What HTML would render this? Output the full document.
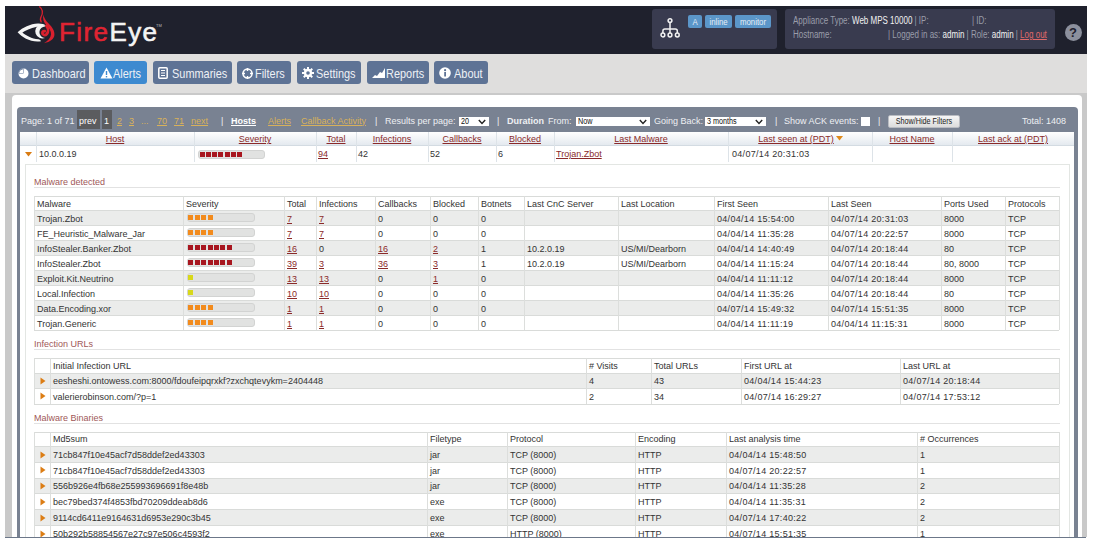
<!DOCTYPE html>
<html><head><meta charset="utf-8"><style>
*{box-sizing:border-box}
html,body{margin:0;padding:0}
body{width:1094px;height:545px;overflow:hidden;background:#fff;position:relative;font-family:"Liberation Sans",sans-serif}
.a{position:absolute}
.t{white-space:nowrap}
.s9{}
.ul{text-decoration:underline}
</style></head><body>
<div class="a" style="left:5px;top:6px;width:1082px;height:48px;background:#1f212d"></div>
<svg class="a" style="left:14px;top:4px" width="42" height="40" viewBox="0 0 42 40">
<path fill="#f4f4f4" d="M3.6 28.3 C9 23.5 16 20 24 19.6 C27.5 19.5 30.5 20.3 32.2 21.8 C29 21.8 26 22 23 22.8 C16 24.5 11.5 26.5 8.4 28.4 C12 31.5 17.5 34.5 24.5 35.3 C25.8 35.6 26.6 36.2 27 37.2 C17 38.5 8.5 34 3.6 28.3 Z"/>
<path fill="#f4f4f4" d="M26 20.4 A6.9 6.9 0 1 0 31 34 A5.2 5.2 0 1 1 31.4 22.4 A6.9 6.9 0 0 0 26 20.4 Z"/>
<path fill="none" stroke="#d6202d" stroke-width="1.3" stroke-linecap="round" d="M25.6 2.8 C29 5.5 29 9 27.2 12.5 C26 14.8 26.3 16.5 27.2 17.8"/>
<path fill="#d9202e" d="M29.4 10.8 C30 14 31.8 16.8 34.6 19.6 C38.4 23.5 40.8 27 40.4 31 C40 35 36.5 37.8 30 39.2 C34 36.8 36.6 34.2 37 30.6 C37.3 27 35 23.8 32.4 21.2 C29.8 18.6 28.4 15 29.4 10.8 Z"/>
<path fill="none" stroke="#d9202e" stroke-width="2.8" stroke-linecap="round" d="M32.4 22 C34.4 24.5 34.6 28 32.8 30 C31.2 31.8 28.6 31.2 28.4 29 C28.3 27.6 29.5 26.8 30.8 27.2"/>
</svg>
<div class="a t" style="left:59px;top:19px;font-size:26px;line-height:26px;letter-spacing:1.4px;-webkit-text-stroke:0.6px"><span style="color:#df2432;-webkit-text-stroke-color:#df2432">Fire</span><span style="color:#f4f4f4;-webkit-text-stroke-color:#f4f4f4">Eye</span></div>
<div class="a t" style="left:156px;top:24px;font-size:4px;line-height:4px;color:#bbb">TM</div>
<div class="a" style="left:652px;top:9px;width:125px;height:40px;background:#393b4f;border-radius:3px"></div>
<svg class="a" style="left:659px;top:16px" width="22" height="24" viewBox="0 0 22 24">
<g fill="none" stroke="#f2f2f2" stroke-width="1.5">
<circle cx="11" cy="4.6" r="1.9"/>
<circle cx="3.9" cy="19" r="1.9"/><circle cx="11" cy="19" r="1.9"/><circle cx="18.3" cy="19" r="1.9"/>
<path d="M11 6.5 V17.1 M3.9 17.1 V15 Q3.9 13 5.9 13 H16.3 Q18.3 13 18.3 15 V17.1"/>
</g></svg>
<div class="a" style="left:688px;top:15px;width:14px;height:13px;background:#5b96c9;border-radius:2px"></div>
<div class="a t cond" style="left:688px;width:14px;top:14.8px;height:13px;line-height:13px;font-size:9.5px;color:#e6eef6;text-align:center;transform:scaleX(0.82)">A</div>
<div class="a" style="left:705px;top:15px;width:27px;height:13px;background:#5b96c9;border-radius:2px"></div>
<div class="a t cond" style="left:705px;width:27px;top:14.8px;height:13px;line-height:13px;font-size:9.5px;color:#e6eef6;text-align:center;transform:scaleX(0.82)">inline</div>
<div class="a" style="left:735px;top:15px;width:36px;height:13px;background:#5b96c9;border-radius:2px"></div>
<div class="a t cond" style="left:735px;width:36px;top:14.8px;height:13px;line-height:13px;font-size:9.5px;color:#e6eef6;text-align:center;transform:scaleX(0.82)">monitor</div>
<div class="a" style="left:785px;top:9px;width:270px;height:40px;background:#393b4f;border-radius:3px"></div>
<div class="a t" style="left:793px;top:16.43px;font-size:10px;line-height:10px;transform:scaleX(0.8);transform-origin:0 0"><span style="color:#9a9daa">Appliance Type: </span><span style="color:#f2f2f2">Web MPS 10000</span><span style="color:#9a9daa"> | IP:</span></div>
<div class="a t" style="left:972px;top:16.43px;font-size:10px;line-height:10px;transform:scaleX(0.8);transform-origin:0 0"><span style="color:#9a9daa">| ID:</span></div>
<div class="a t" style="left:793px;top:30.04px;font-size:10px;line-height:10px;transform:scaleX(0.8);transform-origin:0 0"><span style="color:#9a9daa">Hostname:</span></div>
<div class="a t" style="left:888px;top:30.04px;font-size:10px;line-height:10px;transform:scaleX(0.8);transform-origin:0 0"><span style="color:#9a9daa">| Logged in as: </span><span style="color:#f2f2f2">admin</span><span style="color:#9a9daa"> | Role: </span><span style="color:#f2f2f2">admin</span><span style="color:#9a9daa"> | </span><span style="color:#e06a6a"><u>Log out</u></span></div>
<div class="a" style="left:1064.5px;top:23.5px;width:17px;height:17px;background:#8c909d;border-radius:50%"></div>
<div class="a t" style="left:1064.5px;top:24px;width:17px;height:17px;line-height:17px;text-align:center;font-size:13px;font-weight:bold;color:#1f212d">?</div>
<div class="a" style="left:5px;top:54px;width:1082px;height:39px;background:#dfdedd"></div>
<div class="a" style="left:5px;top:93px;width:1082px;height:444px;background:#c9c9c9"></div>
<div class="a" style="left:12px;top:95px;width:1070px;height:442px;background:#fff;border-radius:4px 4px 0 0"></div>
<div class="a" style="left:12px;top:61px;width:77px;height:23px;background:#5e7395;border-radius:3px"></div>
<svg class="a" style="left:18px;top:68px" width="11" height="11" viewBox="0 0 11 11"><circle cx="5.5" cy="5.5" r="5" fill="#fff"/><path d="M5.5 5.5 V0.5 A5 5 0 0 0 0.5 5.5 Z" fill="#5e7395"/><path d="M5 5 V1.2 A4.3 4.3 0 0 0 1.2 5 Z" fill="#fff"/></svg>
<div class="a t" style="left:32px;top:66.77px;font-size:13.5px;line-height:13.5px;color:#eef1f5;transform:scaleX(0.81);transform-origin:0 0">Dashboard</div>
<div class="a" style="left:94px;top:61px;width:53px;height:23px;background:#3d8ad0;border-radius:3px"></div>
<svg class="a" style="left:100px;top:67px" width="13" height="12" viewBox="0 0 13 12"><path d="M6.5 0.5 L12.5 11.5 H0.5 Z" fill="#fff"/><rect x="5.8" y="4" width="1.4" height="4" fill="#3d8ad0"/><rect x="5.8" y="9" width="1.4" height="1.4" fill="#3d8ad0"/></svg>
<div class="a t" style="left:113px;top:66.77px;font-size:13.5px;line-height:13.5px;color:#eef1f5;transform:scaleX(0.81);transform-origin:0 0">Alerts</div>
<div class="a" style="left:153px;top:61px;width:79px;height:23px;background:#5e7395;border-radius:3px"></div>
<svg class="a" style="left:158px;top:67px" width="10" height="12" viewBox="0 0 10 12"><rect x="0.8" y="0.8" width="8.4" height="10.4" rx="1" fill="none" stroke="#fff" stroke-width="1.5"/><rect x="3" y="3" width="4" height="1" fill="#fff"/><rect x="3" y="5.5" width="4" height="1" fill="#fff"/><rect x="3" y="8" width="4" height="1" fill="#fff"/></svg>
<div class="a t" style="left:172px;top:66.77px;font-size:13.5px;line-height:13.5px;color:#eef1f5;transform:scaleX(0.81);transform-origin:0 0">Summaries</div>
<div class="a" style="left:237px;top:61px;width:54px;height:23px;background:#5e7395;border-radius:3px"></div>
<svg class="a" style="left:242px;top:68px" width="11" height="11" viewBox="0 0 11 11"><circle cx="5.5" cy="5.5" r="4.5" fill="none" stroke="#fff" stroke-width="1.5"/><path d="M5.5 0 V3 M5.5 8 V11 M0 5.5 H3 M8 5.5 H11" stroke="#fff" stroke-width="1.5"/></svg>
<div class="a t" style="left:255px;top:66.77px;font-size:13.5px;line-height:13.5px;color:#eef1f5;transform:scaleX(0.81);transform-origin:0 0">Filters</div>
<div class="a" style="left:297px;top:61px;width:64px;height:23px;background:#5e7395;border-radius:3px"></div>
<svg class="a" style="left:302px;top:67px" width="12" height="12" viewBox="0 0 12 12"><g fill="#fff"><circle cx="6" cy="6" r="4.2"/><rect x="5" y="0" width="2" height="12"/><rect x="0" y="5" width="12" height="2"/><rect x="5" y="0" width="2" height="12" transform="rotate(45 6 6)"/><rect x="5" y="0" width="2" height="12" transform="rotate(-45 6 6)"/></g><circle cx="6" cy="6" r="1.8" fill="#5e7395"/></svg>
<div class="a t" style="left:316px;top:66.77px;font-size:13.5px;line-height:13.5px;color:#eef1f5;transform:scaleX(0.81);transform-origin:0 0">Settings</div>
<div class="a" style="left:367px;top:61px;width:62px;height:23px;background:#5e7395;border-radius:3px"></div>
<svg class="a" style="left:372px;top:68px" width="13" height="10" viewBox="0 0 13 10"><path d="M0 10 L3 7 L5 8 L8 4 L10 5 L13 0 V10 Z" fill="#fff"/></svg>
<div class="a t" style="left:386px;top:66.77px;font-size:13.5px;line-height:13.5px;color:#eef1f5;transform:scaleX(0.81);transform-origin:0 0">Reports</div>
<div class="a" style="left:434px;top:61px;width:54px;height:23px;background:#5e7395;border-radius:3px"></div>
<svg class="a" style="left:439px;top:67px" width="12" height="12" viewBox="0 0 12 12"><circle cx="6" cy="6" r="5.8" fill="#fff"/><rect x="5.2" y="5" width="1.8" height="4.5" fill="#5e7395"/><circle cx="6.1" cy="3.2" r="1.1" fill="#5e7395"/></svg>
<div class="a t" style="left:454px;top:66.77px;font-size:13.5px;line-height:13.5px;color:#eef1f5;transform:scaleX(0.81);transform-origin:0 0">About</div>
<div class="a" style="left:17px;top:107px;width:1061px;height:430px;background:#798292;border-radius:4px 4px 0 0"></div>
<div class="a" style="left:20px;top:132px;width:1054px;height:405px;background:#fff"></div>
<div class="a t  s9" style="left:21px;top:116.58px;font-size:9px;line-height:9px;color:#eef0f2;">Page: 1 of 71</div>
<div class="a" style="left:77px;top:110px;width:23px;height:19px;background:#5b5c5f"></div>
<div class="a t  s9" style="left:79px;top:116.58px;font-size:9px;line-height:9px;color:#fff;">prev</div>
<div class="a" style="left:102px;top:110px;width:10px;height:19px;background:#5b5c5f"></div>
<div class="a t  s9" style="left:104px;top:116.58px;font-size:9px;line-height:9px;color:#fff;">1</div>
<div class="a t  s9" style="left:117px;top:116.58px;font-size:9px;line-height:9px;color:#d8b15a;text-decoration:underline">2</div>
<div class="a t  s9" style="left:129px;top:116.58px;font-size:9px;line-height:9px;color:#d8b15a;text-decoration:underline">3</div>
<div class="a t  s9" style="left:157px;top:116.58px;font-size:9px;line-height:9px;color:#d8b15a;text-decoration:underline">70</div>
<div class="a t  s9" style="left:174px;top:116.58px;font-size:9px;line-height:9px;color:#d8b15a;text-decoration:underline">71</div>
<div class="a t  s9" style="left:191px;top:116.58px;font-size:9px;line-height:9px;color:#d8b15a;text-decoration:underline">next</div>
<div class="a t  s9" style="left:141px;top:116.58px;font-size:9px;line-height:9px;color:#d8b15a;">...</div>
<div class="a t  s9" style="left:221px;top:116.58px;font-size:9px;line-height:9px;color:#eef0f2;">|</div>
<div class="a t  s9" style="left:231px;top:116.58px;font-size:9px;line-height:9px;color:#fff;font-weight:bold;text-decoration:underline">Hosts</div>
<div class="a t  s9" style="left:268px;top:116.58px;font-size:9px;line-height:9px;color:#d8b15a;text-decoration:underline">Alerts</div>
<div class="a t  s9" style="left:301px;top:116.58px;font-size:9px;line-height:9px;color:#d8b15a;text-decoration:underline">Callback Activity</div>
<div class="a t  s9" style="left:375px;top:116.58px;font-size:9px;line-height:9px;color:#eef0f2;">|</div>
<div class="a t  s9" style="left:385px;top:116.58px;font-size:9px;line-height:9px;color:#eef0f2;">Results per page:</div>
<div class="a" style="left:459px;top:117px;width:30px;height:9px;background:#fff"></div>
<div class="a t" style="left:461px;top:116.5px;height:9px;line-height:9px;font-size:8.5px;color:#111;transform:scaleX(0.85);transform-origin:0 0">20</div>
<svg class="a" style="left:478px;top:119px" width="8" height="6" viewBox="0 0 8 6"><path d="M0.8 1 L4 4.5 L7.2 1" fill="none" stroke="#222" stroke-width="1.4"/></svg>
<div class="a t  s9" style="left:497px;top:116.58px;font-size:9px;line-height:9px;color:#eef0f2;">|</div>
<div class="a t  s9" style="left:507px;top:116.58px;font-size:9px;line-height:9px;color:#eef0f2;font-weight:bold">Duration</div>
<div class="a t  s9" style="left:548px;top:116.58px;font-size:9px;line-height:9px;color:#eef0f2;">From:</div>
<div class="a" style="left:576px;top:117px;width:74px;height:9px;background:#fff"></div>
<div class="a t" style="left:578px;top:116.5px;height:9px;line-height:9px;font-size:8.5px;color:#111;transform:scaleX(0.85);transform-origin:0 0">Now</div>
<svg class="a" style="left:639px;top:119px" width="8" height="6" viewBox="0 0 8 6"><path d="M0.8 1 L4 4.5 L7.2 1" fill="none" stroke="#222" stroke-width="1.4"/></svg>
<div class="a t  s9" style="left:654px;top:116.58px;font-size:9px;line-height:9px;color:#eef0f2;">Going Back:</div>
<div class="a" style="left:705px;top:117px;width:61px;height:9px;background:#fff"></div>
<div class="a t" style="left:707px;top:116.5px;height:9px;line-height:9px;font-size:8.5px;color:#111;transform:scaleX(0.85);transform-origin:0 0">3 months</div>
<svg class="a" style="left:755px;top:119px" width="8" height="6" viewBox="0 0 8 6"><path d="M0.8 1 L4 4.5 L7.2 1" fill="none" stroke="#222" stroke-width="1.4"/></svg>
<div class="a t  s9" style="left:775px;top:116.58px;font-size:9px;line-height:9px;color:#eef0f2;">|</div>
<div class="a t  s9" style="left:784px;top:116.58px;font-size:9px;line-height:9px;color:#eef0f2;">Show ACK events:</div>
<div class="a" style="left:861px;top:117px;width:9px;height:9px;background:#fff"></div>
<div class="a t  s9" style="left:878px;top:116.58px;font-size:9px;line-height:9px;color:#eef0f2;">|</div>
<div class="a" style="left:888px;top:115px;width:72px;height:13px;background:linear-gradient(#f6f6f6,#dcdcdc);border:1px solid #b9bcc2;border-radius:2px"></div>
<div class="a t" style="left:888px;top:115px;width:72px;height:13px;line-height:13px;font-size:9px;color:#222;text-align:center;transform:scaleX(0.8);transform-origin:36px 0">Show/Hide Filters</div>
<div class="a t  s9" style="left:1022px;top:117.08px;font-size:9px;line-height:9px;color:#eef0f2;">Total: 1408</div>
<div class="a" style="left:20px;top:132px;width:1054px;height:14px;background:linear-gradient(#ffffff,#e2e8ee)"></div>
<div class="a" style="left:20px;top:145px;width:1054px;height:1px;background:#d3dbe2"></div>
<div class="a" style="left:36px;top:132px;width:1px;height:30px;background:#dde3e8"></div>
<div class="a" style="left:194px;top:132px;width:1px;height:30px;background:#dde3e8"></div>
<div class="a" style="left:316px;top:132px;width:1px;height:30px;background:#dde3e8"></div>
<div class="a" style="left:356px;top:132px;width:1px;height:30px;background:#dde3e8"></div>
<div class="a" style="left:428px;top:132px;width:1px;height:30px;background:#dde3e8"></div>
<div class="a" style="left:496px;top:132px;width:1px;height:30px;background:#dde3e8"></div>
<div class="a" style="left:554px;top:132px;width:1px;height:30px;background:#dde3e8"></div>
<div class="a" style="left:728px;top:132px;width:1px;height:30px;background:#dde3e8"></div>
<div class="a" style="left:872px;top:132px;width:1px;height:30px;background:#dde3e8"></div>
<div class="a" style="left:952px;top:132px;width:1px;height:30px;background:#dde3e8"></div>
<div class="a t ul s9" style="left:-85.0px;width:400px;text-align:center;top:135.08px;font-size:9px;line-height:9px;color:#8a2a2a;">Host</div>
<div class="a t ul s9" style="left:55.0px;width:400px;text-align:center;top:135.08px;font-size:9px;line-height:9px;color:#8a2a2a;">Severity</div>
<div class="a t ul s9" style="left:136.0px;width:400px;text-align:center;top:135.08px;font-size:9px;line-height:9px;color:#8a2a2a;">Total</div>
<div class="a t ul s9" style="left:192.0px;width:400px;text-align:center;top:135.08px;font-size:9px;line-height:9px;color:#8a2a2a;">Infections</div>
<div class="a t ul s9" style="left:262.0px;width:400px;text-align:center;top:135.08px;font-size:9px;line-height:9px;color:#8a2a2a;">Callbacks</div>
<div class="a t ul s9" style="left:325.0px;width:400px;text-align:center;top:135.08px;font-size:9px;line-height:9px;color:#8a2a2a;">Blocked</div>
<div class="a t ul s9" style="left:441.0px;width:400px;text-align:center;top:135.08px;font-size:9px;line-height:9px;color:#8a2a2a;">Last Malware</div>
<div class="a t ul s9" style="left:600.0px;width:400px;text-align:center;top:135.08px;font-size:9px;line-height:9px;color:#8a2a2a;">Last seen at (PDT)<span style="display:inline-block;width:8px"></span></div>
<svg class="a" style="left:836.0px;top:136px" width="7" height="5" viewBox="0 0 7 5"><path d="M0 0 H7 L3.5 4.5 Z" fill="#e08a1a"/></svg>
<div class="a t ul s9" style="left:712.0px;width:400px;text-align:center;top:135.08px;font-size:9px;line-height:9px;color:#8a2a2a;">Host Name</div>
<div class="a t ul s9" style="left:813.0px;width:400px;text-align:center;top:135.08px;font-size:9px;line-height:9px;color:#8a2a2a;">Last ack at (PDT)</div>
<svg class="a" style="left:25px;top:152px" width="7" height="5" viewBox="0 0 7 5"><path d="M0 0 H7 L3.5 4.6 Z" fill="#d97b12"/></svg>
<div class="a t  s9" style="left:39px;top:150.28px;font-size:9px;line-height:9px;color:#333;">10.0.0.19</div>
<div class="a" style="left:198px;top:150px;width:67px;height:9px;background:#e1e2e1;border:1px solid #d2d3d2;border-radius:3px"></div>
<div class="a" style="left:200px;top:152px;width:5px;height:5px;background:#a8161f"></div>
<div class="a" style="left:206px;top:152px;width:5px;height:5px;background:#a8161f"></div>
<div class="a" style="left:212px;top:152px;width:5px;height:5px;background:#a8161f"></div>
<div class="a" style="left:218px;top:152px;width:5px;height:5px;background:#a8161f"></div>
<div class="a" style="left:225px;top:152px;width:5px;height:5px;background:#a8161f"></div>
<div class="a" style="left:231px;top:152px;width:5px;height:5px;background:#a8161f"></div>
<div class="a" style="left:237px;top:152px;width:5px;height:5px;background:#a8161f"></div>
<div class="a t  s9" style="left:318px;top:150.28px;font-size:9px;line-height:9px;color:#8a2a2a;text-decoration:underline">94</div>
<div class="a t  s9" style="left:358px;top:150.28px;font-size:9px;line-height:9px;color:#333;">42</div>
<div class="a t  s9" style="left:430px;top:150.28px;font-size:9px;line-height:9px;color:#333;">52</div>
<div class="a t  s9" style="left:498px;top:150.28px;font-size:9px;line-height:9px;color:#333;">6</div>
<div class="a t  s9" style="left:556px;top:150.28px;font-size:9px;line-height:9px;color:#8a2a2a;text-decoration:underline">Trojan.Zbot</div>
<div class="a t  s9" style="left:732px;top:150.28px;font-size:9px;line-height:9px;color:#333;;letter-spacing:0.3px">04/07/14 20:31:03</div>
<div class="a" style="left:25px;top:164px;width:1045px;height:373px;border:1px solid #e3e6e3;border-bottom:none;background:#fff"></div>
<div class="a t  s9" style="left:34px;top:178.38px;font-size:9px;line-height:9px;color:#a05858;">Malware detected</div>
<div class="a" style="left:34px;top:187.1px;width:1026px;height:1px;background:#e2e2e2"></div>
<div class="a" style="left:34px;top:196px;width:1025px;height:14px;background:#fff"></div>
<div class="a" style="left:34px;top:210px;width:1025px;height:15px;background:#ebeceb"></div>
<div class="a" style="left:34px;top:225px;width:1025px;height:15px;background:#fff"></div>
<div class="a" style="left:34px;top:240px;width:1025px;height:15px;background:#ebeceb"></div>
<div class="a" style="left:34px;top:255px;width:1025px;height:15px;background:#fff"></div>
<div class="a" style="left:34px;top:270px;width:1025px;height:15px;background:#ebeceb"></div>
<div class="a" style="left:34px;top:285px;width:1025px;height:15px;background:#fff"></div>
<div class="a" style="left:34px;top:300px;width:1025px;height:15px;background:#ebeceb"></div>
<div class="a" style="left:34px;top:315px;width:1025px;height:15px;background:#fff"></div>
<div class="a" style="left:34px;top:196px;width:1025px;height:1px;background:#d9dbd9"></div>
<div class="a" style="left:34px;top:210px;width:1025px;height:1px;background:#d9dbd9"></div>
<div class="a" style="left:34px;top:225px;width:1025px;height:1px;background:#d9dbd9"></div>
<div class="a" style="left:34px;top:240px;width:1025px;height:1px;background:#d9dbd9"></div>
<div class="a" style="left:34px;top:255px;width:1025px;height:1px;background:#d9dbd9"></div>
<div class="a" style="left:34px;top:270px;width:1025px;height:1px;background:#d9dbd9"></div>
<div class="a" style="left:34px;top:285px;width:1025px;height:1px;background:#d9dbd9"></div>
<div class="a" style="left:34px;top:300px;width:1025px;height:1px;background:#d9dbd9"></div>
<div class="a" style="left:34px;top:315px;width:1025px;height:1px;background:#d9dbd9"></div>
<div class="a" style="left:34px;top:330px;width:1025px;height:1px;background:#d9dbd9"></div>
<div class="a" style="left:34px;top:196px;width:1px;height:134px;background:#dcdedc"></div>
<div class="a" style="left:183px;top:196px;width:1px;height:134px;background:#dcdedc"></div>
<div class="a" style="left:284px;top:196px;width:1px;height:134px;background:#dcdedc"></div>
<div class="a" style="left:316px;top:196px;width:1px;height:134px;background:#dcdedc"></div>
<div class="a" style="left:375px;top:196px;width:1px;height:134px;background:#dcdedc"></div>
<div class="a" style="left:430px;top:196px;width:1px;height:134px;background:#dcdedc"></div>
<div class="a" style="left:478px;top:196px;width:1px;height:134px;background:#dcdedc"></div>
<div class="a" style="left:524px;top:196px;width:1px;height:134px;background:#dcdedc"></div>
<div class="a" style="left:618px;top:196px;width:1px;height:134px;background:#dcdedc"></div>
<div class="a" style="left:714px;top:196px;width:1px;height:134px;background:#dcdedc"></div>
<div class="a" style="left:828px;top:196px;width:1px;height:134px;background:#dcdedc"></div>
<div class="a" style="left:941px;top:196px;width:1px;height:134px;background:#dcdedc"></div>
<div class="a" style="left:1005px;top:196px;width:1px;height:134px;background:#dcdedc"></div>
<div class="a" style="left:1059px;top:196px;width:1px;height:134px;background:#dcdedc"></div>
<div class="a t  s9" style="left:37px;top:200.08px;font-size:9px;line-height:9px;color:#333;">Malware</div>
<div class="a t  s9" style="left:186px;top:200.08px;font-size:9px;line-height:9px;color:#333;">Severity</div>
<div class="a t  s9" style="left:287px;top:200.08px;font-size:9px;line-height:9px;color:#333;">Total</div>
<div class="a t  s9" style="left:319px;top:200.08px;font-size:9px;line-height:9px;color:#333;">Infections</div>
<div class="a t  s9" style="left:378px;top:200.08px;font-size:9px;line-height:9px;color:#333;">Callbacks</div>
<div class="a t  s9" style="left:433px;top:200.08px;font-size:9px;line-height:9px;color:#333;">Blocked</div>
<div class="a t  s9" style="left:481px;top:200.08px;font-size:9px;line-height:9px;color:#333;">Botnets</div>
<div class="a t  s9" style="left:527px;top:200.08px;font-size:9px;line-height:9px;color:#333;">Last CnC Server</div>
<div class="a t  s9" style="left:621px;top:200.08px;font-size:9px;line-height:9px;color:#333;">Last Location</div>
<div class="a t  s9" style="left:717px;top:200.08px;font-size:9px;line-height:9px;color:#333;">First Seen</div>
<div class="a t  s9" style="left:831px;top:200.08px;font-size:9px;line-height:9px;color:#333;">Last Seen</div>
<div class="a t  s9" style="left:944px;top:200.08px;font-size:9px;line-height:9px;color:#333;">Ports Used</div>
<div class="a t  s9" style="left:1008px;top:200.08px;font-size:9px;line-height:9px;color:#333;">Protocols</div>
<div class="a t  s9" style="left:37px;top:215.38px;font-size:9px;line-height:9px;color:#333;">Trojan.Zbot</div>
<div class="a" style="left:187px;top:213px;width:68px;height:9px;background:#e1e2e1;border:1px solid #d2d3d2;border-radius:3px"></div>
<div class="a" style="left:188px;top:215px;width:5px;height:5px;background:#f28b1d"></div>
<div class="a" style="left:195px;top:215px;width:5px;height:5px;background:#f28b1d"></div>
<div class="a" style="left:201px;top:215px;width:5px;height:5px;background:#f28b1d"></div>
<div class="a" style="left:208px;top:215px;width:5px;height:5px;background:#f28b1d"></div>
<div class="a t  s9" style="left:287px;top:215.38px;font-size:9px;line-height:9px;color:#8a2a2a;text-decoration:underline">7</div>
<div class="a t  s9" style="left:319px;top:215.38px;font-size:9px;line-height:9px;color:#8a2a2a;text-decoration:underline">7</div>
<div class="a t  s9" style="left:378px;top:215.38px;font-size:9px;line-height:9px;color:#333;">0</div>
<div class="a t  s9" style="left:433px;top:215.38px;font-size:9px;line-height:9px;color:#333;">0</div>
<div class="a t  s9" style="left:481px;top:215.38px;font-size:9px;line-height:9px;color:#333;">0</div>
<div class="a t  s9" style="left:717px;top:215.38px;font-size:9px;line-height:9px;color:#333;;letter-spacing:0.3px">04/04/14 15:54:00</div>
<div class="a t  s9" style="left:831px;top:215.38px;font-size:9px;line-height:9px;color:#333;;letter-spacing:0.3px">04/07/14 20:31:03</div>
<div class="a t  s9" style="left:944px;top:215.38px;font-size:9px;line-height:9px;color:#333;">8000</div>
<div class="a t  s9" style="left:1008px;top:215.38px;font-size:9px;line-height:9px;color:#333;">TCP</div>
<div class="a t  s9" style="left:37px;top:230.38px;font-size:9px;line-height:9px;color:#333;">FE_Heuristic_Malware_Jar</div>
<div class="a" style="left:187px;top:228px;width:68px;height:9px;background:#e1e2e1;border:1px solid #d2d3d2;border-radius:3px"></div>
<div class="a" style="left:188px;top:230px;width:5px;height:5px;background:#f28b1d"></div>
<div class="a" style="left:195px;top:230px;width:5px;height:5px;background:#f28b1d"></div>
<div class="a" style="left:201px;top:230px;width:5px;height:5px;background:#f28b1d"></div>
<div class="a" style="left:208px;top:230px;width:5px;height:5px;background:#f28b1d"></div>
<div class="a t  s9" style="left:287px;top:230.38px;font-size:9px;line-height:9px;color:#8a2a2a;text-decoration:underline">7</div>
<div class="a t  s9" style="left:319px;top:230.38px;font-size:9px;line-height:9px;color:#8a2a2a;text-decoration:underline">7</div>
<div class="a t  s9" style="left:378px;top:230.38px;font-size:9px;line-height:9px;color:#333;">0</div>
<div class="a t  s9" style="left:433px;top:230.38px;font-size:9px;line-height:9px;color:#333;">0</div>
<div class="a t  s9" style="left:481px;top:230.38px;font-size:9px;line-height:9px;color:#333;">0</div>
<div class="a t  s9" style="left:717px;top:230.38px;font-size:9px;line-height:9px;color:#333;;letter-spacing:0.3px">04/04/14 11:35:28</div>
<div class="a t  s9" style="left:831px;top:230.38px;font-size:9px;line-height:9px;color:#333;;letter-spacing:0.3px">04/07/14 20:22:57</div>
<div class="a t  s9" style="left:944px;top:230.38px;font-size:9px;line-height:9px;color:#333;">8000</div>
<div class="a t  s9" style="left:1008px;top:230.38px;font-size:9px;line-height:9px;color:#333;">TCP</div>
<div class="a t  s9" style="left:37px;top:245.38px;font-size:9px;line-height:9px;color:#333;">InfoStealer.Banker.Zbot</div>
<div class="a" style="left:187px;top:243px;width:68px;height:9px;background:#e1e2e1;border:1px solid #d2d3d2;border-radius:3px"></div>
<div class="a" style="left:188px;top:245px;width:5px;height:5px;background:#a8161f"></div>
<div class="a" style="left:195px;top:245px;width:5px;height:5px;background:#a8161f"></div>
<div class="a" style="left:201px;top:245px;width:5px;height:5px;background:#a8161f"></div>
<div class="a" style="left:208px;top:245px;width:5px;height:5px;background:#a8161f"></div>
<div class="a" style="left:214px;top:245px;width:5px;height:5px;background:#a8161f"></div>
<div class="a" style="left:220px;top:245px;width:5px;height:5px;background:#a8161f"></div>
<div class="a" style="left:227px;top:245px;width:5px;height:5px;background:#a8161f"></div>
<div class="a t  s9" style="left:287px;top:245.38px;font-size:9px;line-height:9px;color:#8a2a2a;text-decoration:underline">16</div>
<div class="a t  s9" style="left:319px;top:245.38px;font-size:9px;line-height:9px;color:#333;">0</div>
<div class="a t  s9" style="left:378px;top:245.38px;font-size:9px;line-height:9px;color:#8a2a2a;text-decoration:underline">16</div>
<div class="a t  s9" style="left:433px;top:245.38px;font-size:9px;line-height:9px;color:#8a2a2a;text-decoration:underline">2</div>
<div class="a t  s9" style="left:481px;top:245.38px;font-size:9px;line-height:9px;color:#333;">1</div>
<div class="a t  s9" style="left:527px;top:245.38px;font-size:9px;line-height:9px;color:#333;">10.2.0.19</div>
<div class="a t  s9" style="left:621px;top:245.38px;font-size:9px;line-height:9px;color:#333;">US/MI/Dearborn</div>
<div class="a t  s9" style="left:717px;top:245.38px;font-size:9px;line-height:9px;color:#333;;letter-spacing:0.3px">04/04/14 14:40:49</div>
<div class="a t  s9" style="left:831px;top:245.38px;font-size:9px;line-height:9px;color:#333;;letter-spacing:0.3px">04/07/14 20:18:44</div>
<div class="a t  s9" style="left:944px;top:245.38px;font-size:9px;line-height:9px;color:#333;">80</div>
<div class="a t  s9" style="left:1008px;top:245.38px;font-size:9px;line-height:9px;color:#333;">TCP</div>
<div class="a t  s9" style="left:37px;top:260.38px;font-size:9px;line-height:9px;color:#333;">InfoStealer.Zbot</div>
<div class="a" style="left:187px;top:258px;width:68px;height:9px;background:#e1e2e1;border:1px solid #d2d3d2;border-radius:3px"></div>
<div class="a" style="left:188px;top:260px;width:5px;height:5px;background:#a8161f"></div>
<div class="a" style="left:195px;top:260px;width:5px;height:5px;background:#a8161f"></div>
<div class="a" style="left:201px;top:260px;width:5px;height:5px;background:#a8161f"></div>
<div class="a" style="left:208px;top:260px;width:5px;height:5px;background:#a8161f"></div>
<div class="a" style="left:214px;top:260px;width:5px;height:5px;background:#a8161f"></div>
<div class="a" style="left:220px;top:260px;width:5px;height:5px;background:#a8161f"></div>
<div class="a" style="left:227px;top:260px;width:5px;height:5px;background:#a8161f"></div>
<div class="a t  s9" style="left:287px;top:260.38px;font-size:9px;line-height:9px;color:#8a2a2a;text-decoration:underline">39</div>
<div class="a t  s9" style="left:319px;top:260.38px;font-size:9px;line-height:9px;color:#8a2a2a;text-decoration:underline">3</div>
<div class="a t  s9" style="left:378px;top:260.38px;font-size:9px;line-height:9px;color:#8a2a2a;text-decoration:underline">36</div>
<div class="a t  s9" style="left:433px;top:260.38px;font-size:9px;line-height:9px;color:#8a2a2a;text-decoration:underline">3</div>
<div class="a t  s9" style="left:481px;top:260.38px;font-size:9px;line-height:9px;color:#333;">1</div>
<div class="a t  s9" style="left:527px;top:260.38px;font-size:9px;line-height:9px;color:#333;">10.2.0.19</div>
<div class="a t  s9" style="left:621px;top:260.38px;font-size:9px;line-height:9px;color:#333;">US/MI/Dearborn</div>
<div class="a t  s9" style="left:717px;top:260.38px;font-size:9px;line-height:9px;color:#333;;letter-spacing:0.3px">04/04/14 11:15:24</div>
<div class="a t  s9" style="left:831px;top:260.38px;font-size:9px;line-height:9px;color:#333;;letter-spacing:0.3px">04/07/14 20:18:44</div>
<div class="a t  s9" style="left:944px;top:260.38px;font-size:9px;line-height:9px;color:#333;">80, 8000</div>
<div class="a t  s9" style="left:1008px;top:260.38px;font-size:9px;line-height:9px;color:#333;">TCP</div>
<div class="a t  s9" style="left:37px;top:275.38px;font-size:9px;line-height:9px;color:#333;">Exploit.Kit.Neutrino</div>
<div class="a" style="left:187px;top:273px;width:68px;height:9px;background:#e1e2e1;border:1px solid #d2d3d2;border-radius:3px"></div>
<div class="a" style="left:188px;top:275px;width:5px;height:5px;background:#d8d81b"></div>
<div class="a t  s9" style="left:287px;top:275.38px;font-size:9px;line-height:9px;color:#8a2a2a;text-decoration:underline">13</div>
<div class="a t  s9" style="left:319px;top:275.38px;font-size:9px;line-height:9px;color:#8a2a2a;text-decoration:underline">13</div>
<div class="a t  s9" style="left:378px;top:275.38px;font-size:9px;line-height:9px;color:#333;">0</div>
<div class="a t  s9" style="left:433px;top:275.38px;font-size:9px;line-height:9px;color:#8a2a2a;text-decoration:underline">1</div>
<div class="a t  s9" style="left:481px;top:275.38px;font-size:9px;line-height:9px;color:#333;">0</div>
<div class="a t  s9" style="left:717px;top:275.38px;font-size:9px;line-height:9px;color:#333;;letter-spacing:0.3px">04/04/14 11:11:12</div>
<div class="a t  s9" style="left:831px;top:275.38px;font-size:9px;line-height:9px;color:#333;;letter-spacing:0.3px">04/07/14 20:18:44</div>
<div class="a t  s9" style="left:944px;top:275.38px;font-size:9px;line-height:9px;color:#333;">8000</div>
<div class="a t  s9" style="left:1008px;top:275.38px;font-size:9px;line-height:9px;color:#333;">TCP</div>
<div class="a t  s9" style="left:37px;top:290.38px;font-size:9px;line-height:9px;color:#333;">Local.Infection</div>
<div class="a" style="left:187px;top:288px;width:68px;height:9px;background:#e1e2e1;border:1px solid #d2d3d2;border-radius:3px"></div>
<div class="a" style="left:188px;top:290px;width:5px;height:5px;background:#d8d81b"></div>
<div class="a t  s9" style="left:287px;top:290.38px;font-size:9px;line-height:9px;color:#8a2a2a;text-decoration:underline">10</div>
<div class="a t  s9" style="left:319px;top:290.38px;font-size:9px;line-height:9px;color:#8a2a2a;text-decoration:underline">10</div>
<div class="a t  s9" style="left:378px;top:290.38px;font-size:9px;line-height:9px;color:#333;">0</div>
<div class="a t  s9" style="left:433px;top:290.38px;font-size:9px;line-height:9px;color:#333;">0</div>
<div class="a t  s9" style="left:481px;top:290.38px;font-size:9px;line-height:9px;color:#333;">0</div>
<div class="a t  s9" style="left:717px;top:290.38px;font-size:9px;line-height:9px;color:#333;;letter-spacing:0.3px">04/04/14 11:35:26</div>
<div class="a t  s9" style="left:831px;top:290.38px;font-size:9px;line-height:9px;color:#333;;letter-spacing:0.3px">04/07/14 20:18:44</div>
<div class="a t  s9" style="left:944px;top:290.38px;font-size:9px;line-height:9px;color:#333;">80</div>
<div class="a t  s9" style="left:1008px;top:290.38px;font-size:9px;line-height:9px;color:#333;">TCP</div>
<div class="a t  s9" style="left:37px;top:305.38px;font-size:9px;line-height:9px;color:#333;">Data.Encoding.xor</div>
<div class="a" style="left:187px;top:303px;width:68px;height:9px;background:#e1e2e1;border:1px solid #d2d3d2;border-radius:3px"></div>
<div class="a" style="left:188px;top:305px;width:5px;height:5px;background:#f28b1d"></div>
<div class="a" style="left:195px;top:305px;width:5px;height:5px;background:#f28b1d"></div>
<div class="a" style="left:201px;top:305px;width:5px;height:5px;background:#f28b1d"></div>
<div class="a" style="left:208px;top:305px;width:5px;height:5px;background:#f28b1d"></div>
<div class="a t  s9" style="left:287px;top:305.38px;font-size:9px;line-height:9px;color:#8a2a2a;text-decoration:underline">1</div>
<div class="a t  s9" style="left:319px;top:305.38px;font-size:9px;line-height:9px;color:#8a2a2a;text-decoration:underline">1</div>
<div class="a t  s9" style="left:378px;top:305.38px;font-size:9px;line-height:9px;color:#333;">0</div>
<div class="a t  s9" style="left:433px;top:305.38px;font-size:9px;line-height:9px;color:#333;">0</div>
<div class="a t  s9" style="left:481px;top:305.38px;font-size:9px;line-height:9px;color:#333;">0</div>
<div class="a t  s9" style="left:717px;top:305.38px;font-size:9px;line-height:9px;color:#333;;letter-spacing:0.3px">04/07/14 15:49:32</div>
<div class="a t  s9" style="left:831px;top:305.38px;font-size:9px;line-height:9px;color:#333;;letter-spacing:0.3px">04/07/14 15:51:35</div>
<div class="a t  s9" style="left:944px;top:305.38px;font-size:9px;line-height:9px;color:#333;">8000</div>
<div class="a t  s9" style="left:1008px;top:305.38px;font-size:9px;line-height:9px;color:#333;">TCP</div>
<div class="a t  s9" style="left:37px;top:320.38px;font-size:9px;line-height:9px;color:#333;">Trojan.Generic</div>
<div class="a" style="left:187px;top:318px;width:68px;height:9px;background:#e1e2e1;border:1px solid #d2d3d2;border-radius:3px"></div>
<div class="a" style="left:188px;top:320px;width:5px;height:5px;background:#f28b1d"></div>
<div class="a" style="left:195px;top:320px;width:5px;height:5px;background:#f28b1d"></div>
<div class="a" style="left:201px;top:320px;width:5px;height:5px;background:#f28b1d"></div>
<div class="a" style="left:208px;top:320px;width:5px;height:5px;background:#f28b1d"></div>
<div class="a t  s9" style="left:287px;top:320.38px;font-size:9px;line-height:9px;color:#8a2a2a;text-decoration:underline">1</div>
<div class="a t  s9" style="left:319px;top:320.38px;font-size:9px;line-height:9px;color:#8a2a2a;text-decoration:underline">1</div>
<div class="a t  s9" style="left:378px;top:320.38px;font-size:9px;line-height:9px;color:#333;">0</div>
<div class="a t  s9" style="left:433px;top:320.38px;font-size:9px;line-height:9px;color:#333;">0</div>
<div class="a t  s9" style="left:481px;top:320.38px;font-size:9px;line-height:9px;color:#333;">0</div>
<div class="a t  s9" style="left:717px;top:320.38px;font-size:9px;line-height:9px;color:#333;;letter-spacing:0.3px">04/04/14 11:11:19</div>
<div class="a t  s9" style="left:831px;top:320.38px;font-size:9px;line-height:9px;color:#333;;letter-spacing:0.3px">04/04/14 11:15:31</div>
<div class="a t  s9" style="left:944px;top:320.38px;font-size:9px;line-height:9px;color:#333;">8000</div>
<div class="a t  s9" style="left:1008px;top:320.38px;font-size:9px;line-height:9px;color:#333;">TCP</div>
<div class="a t  s9" style="left:34px;top:340.28px;font-size:9px;line-height:9px;color:#a05858;">Infection URLs</div>
<div class="a" style="left:34px;top:349px;width:1026px;height:1px;background:#e2e2e2"></div>
<div class="a" style="left:34px;top:358px;width:1025px;height:15px;background:#fff"></div>
<div class="a" style="left:34px;top:373px;width:1025px;height:15.2px;background:#ebeceb"></div>
<div class="a" style="left:34px;top:388.2px;width:1025px;height:16px;background:#fff"></div>
<div class="a" style="left:34px;top:358px;width:1025px;height:1px;background:#d9dbd9"></div>
<div class="a" style="left:34px;top:373px;width:1025px;height:1px;background:#d9dbd9"></div>
<div class="a" style="left:34px;top:388.2px;width:1025px;height:1px;background:#d9dbd9"></div>
<div class="a" style="left:34px;top:404.2px;width:1025px;height:1px;background:#d9dbd9"></div>
<div class="a" style="left:34px;top:358px;width:1px;height:46.19999999999999px;background:#dcdedc"></div>
<div class="a" style="left:50px;top:358px;width:1px;height:46.19999999999999px;background:#dcdedc"></div>
<div class="a" style="left:586px;top:358px;width:1px;height:46.19999999999999px;background:#dcdedc"></div>
<div class="a" style="left:651px;top:358px;width:1px;height:46.19999999999999px;background:#dcdedc"></div>
<div class="a" style="left:741px;top:358px;width:1px;height:46.19999999999999px;background:#dcdedc"></div>
<div class="a" style="left:900px;top:358px;width:1px;height:46.19999999999999px;background:#dcdedc"></div>
<div class="a" style="left:1059px;top:358px;width:1px;height:46.19999999999999px;background:#dcdedc"></div>
<div class="a t  s9" style="left:53px;top:361.78px;font-size:9px;line-height:9px;color:#333;">Initial Infection URL</div>
<div class="a t  s9" style="left:589px;top:361.78px;font-size:9px;line-height:9px;color:#333;"># Visits</div>
<div class="a t  s9" style="left:654px;top:361.78px;font-size:9px;line-height:9px;color:#333;">Total URLs</div>
<div class="a t  s9" style="left:744px;top:361.78px;font-size:9px;line-height:9px;color:#333;">First URL at</div>
<div class="a t  s9" style="left:903px;top:361.78px;font-size:9px;line-height:9px;color:#333;">Last URL at</div>
<svg class="a" style="left:39.5px;top:377px" width="6" height="8" viewBox="0 0 6 8"><path d="M0.5 0.5 L5.5 4 L0.5 7.5 Z" fill="#dc7d14"/></svg>
<div class="a t  s9" style="left:53px;top:376.88px;font-size:9px;line-height:9px;color:#333;">eesheshi.ontowess.com:8000/fdoufeipqrxkf?zxchqtevykm=2404448</div>
<div class="a t  s9" style="left:589px;top:376.88px;font-size:9px;line-height:9px;color:#333;">4</div>
<div class="a t  s9" style="left:654px;top:376.88px;font-size:9px;line-height:9px;color:#333;">43</div>
<div class="a t  s9" style="left:744px;top:376.88px;font-size:9px;line-height:9px;color:#333;;letter-spacing:0.3px">04/04/14 15:44:23</div>
<div class="a t  s9" style="left:903px;top:376.88px;font-size:9px;line-height:9px;color:#333;;letter-spacing:0.3px">04/07/14 20:18:44</div>
<svg class="a" style="left:39.5px;top:392.2px" width="6" height="8" viewBox="0 0 6 8"><path d="M0.5 0.5 L5.5 4 L0.5 7.5 Z" fill="#dc7d14"/></svg>
<div class="a t  s9" style="left:53px;top:392.58px;font-size:9px;line-height:9px;color:#333;">valerierobinson.com/?p=1</div>
<div class="a t  s9" style="left:589px;top:392.58px;font-size:9px;line-height:9px;color:#333;">2</div>
<div class="a t  s9" style="left:654px;top:392.58px;font-size:9px;line-height:9px;color:#333;">34</div>
<div class="a t  s9" style="left:744px;top:392.58px;font-size:9px;line-height:9px;color:#333;;letter-spacing:0.3px">04/07/14 16:29:27</div>
<div class="a t  s9" style="left:903px;top:392.58px;font-size:9px;line-height:9px;color:#333;;letter-spacing:0.3px">04/07/14 17:53:12</div>
<div class="a t  s9" style="left:34px;top:414.08px;font-size:9px;line-height:9px;color:#a05858;">Malware Binaries</div>
<div class="a" style="left:34px;top:422.8px;width:1026px;height:1px;background:#e2e2e2"></div>
<div class="a" style="left:34px;top:431.5px;width:1025px;height:14.5px;background:#fff"></div>
<div class="a" style="left:34px;top:446.0px;width:1025px;height:15.8px;background:#ebeceb"></div>
<div class="a" style="left:34px;top:461.8px;width:1025px;height:15.8px;background:#fff"></div>
<div class="a" style="left:34px;top:477.6px;width:1025px;height:15.8px;background:#ebeceb"></div>
<div class="a" style="left:34px;top:493.40000000000003px;width:1025px;height:15.8px;background:#fff"></div>
<div class="a" style="left:34px;top:509.20000000000005px;width:1025px;height:15.8px;background:#ebeceb"></div>
<div class="a" style="left:34px;top:525.0px;width:1025px;height:15.8px;background:#fff"></div>
<div class="a" style="left:34px;top:431.5px;width:1025px;height:1px;background:#d9dbd9"></div>
<div class="a" style="left:34px;top:446.0px;width:1025px;height:1px;background:#d9dbd9"></div>
<div class="a" style="left:34px;top:461.8px;width:1025px;height:1px;background:#d9dbd9"></div>
<div class="a" style="left:34px;top:477.6px;width:1025px;height:1px;background:#d9dbd9"></div>
<div class="a" style="left:34px;top:493.40000000000003px;width:1025px;height:1px;background:#d9dbd9"></div>
<div class="a" style="left:34px;top:509.20000000000005px;width:1025px;height:1px;background:#d9dbd9"></div>
<div class="a" style="left:34px;top:525.0px;width:1025px;height:1px;background:#d9dbd9"></div>
<div class="a" style="left:34px;top:540.8px;width:1025px;height:1px;background:#d9dbd9"></div>
<div class="a" style="left:34px;top:431.5px;width:1px;height:109.29999999999995px;background:#dcdedc"></div>
<div class="a" style="left:50px;top:431.5px;width:1px;height:109.29999999999995px;background:#dcdedc"></div>
<div class="a" style="left:427px;top:431.5px;width:1px;height:109.29999999999995px;background:#dcdedc"></div>
<div class="a" style="left:507px;top:431.5px;width:1px;height:109.29999999999995px;background:#dcdedc"></div>
<div class="a" style="left:635px;top:431.5px;width:1px;height:109.29999999999995px;background:#dcdedc"></div>
<div class="a" style="left:726px;top:431.5px;width:1px;height:109.29999999999995px;background:#dcdedc"></div>
<div class="a" style="left:917px;top:431.5px;width:1px;height:109.29999999999995px;background:#dcdedc"></div>
<div class="a" style="left:1059px;top:431.5px;width:1px;height:109.29999999999995px;background:#dcdedc"></div>
<div class="a t  s9" style="left:53px;top:435.28px;font-size:9px;line-height:9px;color:#333;">Md5sum</div>
<div class="a t  s9" style="left:430px;top:435.28px;font-size:9px;line-height:9px;color:#333;">Filetype</div>
<div class="a t  s9" style="left:510px;top:435.28px;font-size:9px;line-height:9px;color:#333;">Protocol</div>
<div class="a t  s9" style="left:638px;top:435.28px;font-size:9px;line-height:9px;color:#333;">Encoding</div>
<div class="a t  s9" style="left:729px;top:435.28px;font-size:9px;line-height:9px;color:#333;">Last analysis time</div>
<div class="a t  s9" style="left:920px;top:435.28px;font-size:9px;line-height:9px;color:#333;"># Occurrences</div>
<svg class="a" style="left:39.5px;top:450.5px" width="6" height="8" viewBox="0 0 6 8"><path d="M0.5 0.5 L5.5 4 L0.5 7.5 Z" fill="#dc7d14"/></svg>
<div class="a t  s9" style="left:53px;top:450.78px;font-size:9px;line-height:9px;color:#333;">71cb847f10e45acf7d58ddef2ed43303</div>
<div class="a t  s9" style="left:430px;top:450.78px;font-size:9px;line-height:9px;color:#333;">jar</div>
<div class="a t  s9" style="left:510px;top:450.78px;font-size:9px;line-height:9px;color:#333;">TCP (8000)</div>
<div class="a t  s9" style="left:638px;top:450.78px;font-size:9px;line-height:9px;color:#333;">HTTP</div>
<div class="a t  s9" style="left:729px;top:450.78px;font-size:9px;line-height:9px;color:#333;;letter-spacing:0.3px">04/04/14 15:48:50</div>
<div class="a t  s9" style="left:920px;top:450.78px;font-size:9px;line-height:9px;color:#333;">1</div>
<svg class="a" style="left:39.5px;top:466.3px" width="6" height="8" viewBox="0 0 6 8"><path d="M0.5 0.5 L5.5 4 L0.5 7.5 Z" fill="#dc7d14"/></svg>
<div class="a t  s9" style="left:53px;top:466.58px;font-size:9px;line-height:9px;color:#333;">71cb847f10e45acf7d58ddef2ed43303</div>
<div class="a t  s9" style="left:430px;top:466.58px;font-size:9px;line-height:9px;color:#333;">jar</div>
<div class="a t  s9" style="left:510px;top:466.58px;font-size:9px;line-height:9px;color:#333;">TCP (8000)</div>
<div class="a t  s9" style="left:638px;top:466.58px;font-size:9px;line-height:9px;color:#333;">HTTP</div>
<div class="a t  s9" style="left:729px;top:466.58px;font-size:9px;line-height:9px;color:#333;;letter-spacing:0.3px">04/07/14 20:22:57</div>
<div class="a t  s9" style="left:920px;top:466.58px;font-size:9px;line-height:9px;color:#333;">1</div>
<svg class="a" style="left:39.5px;top:482.1px" width="6" height="8" viewBox="0 0 6 8"><path d="M0.5 0.5 L5.5 4 L0.5 7.5 Z" fill="#dc7d14"/></svg>
<div class="a t  s9" style="left:53px;top:482.38px;font-size:9px;line-height:9px;color:#333;">556b926e4fb68e255993696691f8e48b</div>
<div class="a t  s9" style="left:430px;top:482.38px;font-size:9px;line-height:9px;color:#333;">jar</div>
<div class="a t  s9" style="left:510px;top:482.38px;font-size:9px;line-height:9px;color:#333;">TCP (8000)</div>
<div class="a t  s9" style="left:638px;top:482.38px;font-size:9px;line-height:9px;color:#333;">HTTP</div>
<div class="a t  s9" style="left:729px;top:482.38px;font-size:9px;line-height:9px;color:#333;;letter-spacing:0.3px">04/04/14 11:35:28</div>
<div class="a t  s9" style="left:920px;top:482.38px;font-size:9px;line-height:9px;color:#333;">2</div>
<svg class="a" style="left:39.5px;top:497.90000000000003px" width="6" height="8" viewBox="0 0 6 8"><path d="M0.5 0.5 L5.5 4 L0.5 7.5 Z" fill="#dc7d14"/></svg>
<div class="a t  s9" style="left:53px;top:498.18px;font-size:9px;line-height:9px;color:#333;">bec79bed374f4853fbd70209ddeab8d6</div>
<div class="a t  s9" style="left:430px;top:498.18px;font-size:9px;line-height:9px;color:#333;">exe</div>
<div class="a t  s9" style="left:510px;top:498.18px;font-size:9px;line-height:9px;color:#333;">TCP (8000)</div>
<div class="a t  s9" style="left:638px;top:498.18px;font-size:9px;line-height:9px;color:#333;">HTTP</div>
<div class="a t  s9" style="left:729px;top:498.18px;font-size:9px;line-height:9px;color:#333;;letter-spacing:0.3px">04/04/14 11:35:31</div>
<div class="a t  s9" style="left:920px;top:498.18px;font-size:9px;line-height:9px;color:#333;">2</div>
<svg class="a" style="left:39.5px;top:513.7px" width="6" height="8" viewBox="0 0 6 8"><path d="M0.5 0.5 L5.5 4 L0.5 7.5 Z" fill="#dc7d14"/></svg>
<div class="a t  s9" style="left:53px;top:513.98px;font-size:9px;line-height:9px;color:#333;">9114cd6411e9164631d6953e290c3b45</div>
<div class="a t  s9" style="left:430px;top:513.98px;font-size:9px;line-height:9px;color:#333;">exe</div>
<div class="a t  s9" style="left:510px;top:513.98px;font-size:9px;line-height:9px;color:#333;">TCP (8000)</div>
<div class="a t  s9" style="left:638px;top:513.98px;font-size:9px;line-height:9px;color:#333;">HTTP</div>
<div class="a t  s9" style="left:729px;top:513.98px;font-size:9px;line-height:9px;color:#333;;letter-spacing:0.3px">04/07/14 17:40:22</div>
<div class="a t  s9" style="left:920px;top:513.98px;font-size:9px;line-height:9px;color:#333;">2</div>
<svg class="a" style="left:39.5px;top:529.5px" width="6" height="8" viewBox="0 0 6 8"><path d="M0.5 0.5 L5.5 4 L0.5 7.5 Z" fill="#dc7d14"/></svg>
<div class="a t  s9" style="left:53px;top:529.78px;font-size:9px;line-height:9px;color:#333;">50b292b58854567e27c97e506c4593f2</div>
<div class="a t  s9" style="left:430px;top:529.78px;font-size:9px;line-height:9px;color:#333;">exe</div>
<div class="a t  s9" style="left:510px;top:529.78px;font-size:9px;line-height:9px;color:#333;">HTTP (8000)</div>
<div class="a t  s9" style="left:638px;top:529.78px;font-size:9px;line-height:9px;color:#333;">HTTP</div>
<div class="a t  s9" style="left:729px;top:529.78px;font-size:9px;line-height:9px;color:#333;;letter-spacing:0.3px">04/07/14 15:51:35</div>
<div class="a t  s9" style="left:920px;top:529.78px;font-size:9px;line-height:9px;color:#333;">1</div>
<div class="a" style="left:0px;top:537px;width:1094px;height:8px;background:#fff"></div>
<div class="a" style="left:5px;top:537px;width:1081px;height:1px;background:#6c7789"></div>
</body></html>
